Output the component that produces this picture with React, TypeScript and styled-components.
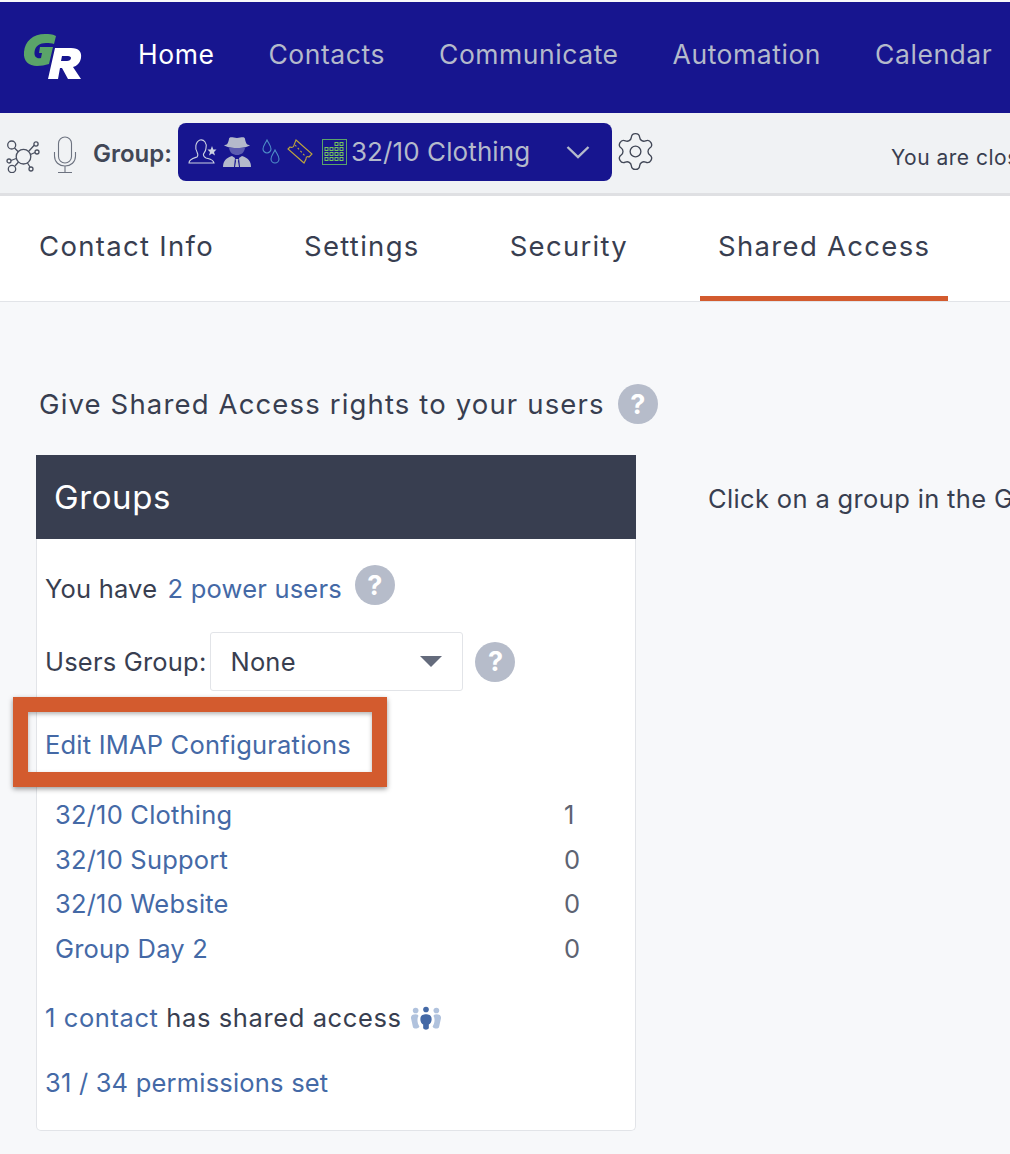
import styled, { createGlobalStyle } from 'styled-components'
import { Settings } from 'lucide-react'

const GlobalStyle = createGlobalStyle`
  html, body {
    margin: 0;
    padding: 0;
    background: #f7f8fa;
    overflow: hidden;
  }
  * {
    box-sizing: border-box;
  }
  body {
    font-family: Inter, "Liberation Sans", sans-serif;
    color: #383e50;
  }
`

const Page = styled.div`
  width: 1010px;
  height: 1154px;
  padding-top: 2px;
  background: #f7f8fa;
  overflow: hidden;
  position: relative;
`

const Navbar = styled.nav`
  height: 111px;
  background: #17158f;
  display: flex;
  align-items: center;
  padding: 0 0 8px 22px;
  white-space: nowrap;
`

const LogoBox = styled.svg`
  width: 62px;
  height: 50px;
  margin: 8px 54px 0 0;
  flex-shrink: 0;
`

const NavLink = styled.a<{ $active?: boolean }>`
  font-size: 26.5px;
  letter-spacing: 0.55px;
  margin-right: 54px;
  color: ${p => (p.$active ? '#ffffff' : '#b4bacb')};
`

const Toolbar = styled.div`
  height: 83px;
  background: #f0f2f4;
  border-bottom: 3px solid #dfe0e3;
  display: flex;
  align-items: center;
  padding: 0 0 2px 6px;
  white-space: nowrap;
`

const ToolIcon = styled.svg`
  flex-shrink: 0;
  fill: none;
  stroke: #4a5060;
  stroke-width: 1.3;
`

const NetworkSvg = styled(ToolIcon)`
  margin-top: 8px;
`

const MicSvg = styled(ToolIcon)`
  margin: 5px 0 0 13px;
  stroke: #6d7380;
  stroke-width: 1.1;
`

const GearIcon = styled(Settings)`
  flex-shrink: 0;
  margin: -2px 0 0 2px;
  color: #414756;
`

const GroupLabel = styled.span`
  font-size: 24px;
  font-weight: 600;
  margin: 3px 6px 0 16px;
  color: #414756;
`

const GroupSelect = styled.div`
  width: 434px;
  height: 58px;
  background: #17158f;
  border-radius: 8px;
  display: flex;
  align-items: center;
  padding: 0 22px 0 10px;
  flex-shrink: 0;
`

const GroupIcon = styled.svg`
  flex-shrink: 0;
`

const SpySvg = styled(GroupIcon)`
  margin: 0 0 0 5px;
`

const DropsSvg = styled(GroupIcon)`
  margin: 0 0 0 9px;
`

const TicketSvg = styled(GroupIcon)`
  margin: 0 0 0 6px;
`

const BuildingSvg = styled(GroupIcon)`
  margin: 0 0 0 9px;
`

const GroupName = styled.span`
  font-size: 26px;
  letter-spacing: 0.1px;
  color: #b4bacb;
  margin: -2px 0 0 4px;
  flex: 1;
`

const Closing = styled.span`
  font-size: 21px;
  letter-spacing: 0.5px;
  margin: 10px 0 0 234px;
  color: #383e50;
`

const Tabs = styled.div`
  height: 106px;
  background: #ffffff;
  border-bottom: 1px solid #e2e4e8;
  display: flex;
  padding-left: 21px;
`

const Tab = styled.a<{ $active?: boolean }>`
  height: 105px;
  padding: 0 18px;
  margin-right: 54px;
  display: flex;
  align-items: center;
  font-size: 27.5px;
  letter-spacing: 1.3px;
  color: #383e50;
  border-bottom: 5px solid ${p => (p.$active ? '#d35b2e' : 'transparent')};
`

const Content = styled.div`
  padding: 80px 0 0 36px;
`

const Heading = styled.div`
  height: 44px;
  display: flex;
  align-items: center;
  gap: 13px;
  padding-left: 3px;
  font-size: 27.5px;
  letter-spacing: 1.15px;
  color: #383e50;
`

const HelpDot = styled.span`
  width: 40px;
  height: 40px;
  border-radius: 50%;
  background: #b6bcca;
  color: #ffffff;
  font-size: 27px;
  font-weight: 700;
  letter-spacing: 0;
  display: inline-flex;
  align-items: center;
  justify-content: center;
  flex-shrink: 0;
`

const PowerHelp = styled(HelpDot)`
  margin: 0 0 6px 13px;
`

const Columns = styled.div`
  display: flex;
  margin-top: 29px;
`

const Panel = styled.section`
  width: 600px;
  height: 676px;
  background: #ffffff;
  border: 1px solid #e2e4e8;
  border-top: none;
  border-radius: 0 0 5px 5px;
  flex-shrink: 0;
`

const PanelHeader = styled.h2`
  margin: 0 -1px;
  height: 84px;
  padding-left: 18px;
  background: #383e50;
  color: #ffffff;
  display: flex;
  align-items: center;
  font-size: 33px;
  letter-spacing: 0.6px;
  font-weight: 400;
`

const PanelBody = styled.div`
  padding: 26px 0 0 8px;
  font-size: 25.5px;
  letter-spacing: 0.2px;
  color: #383e50;
`

const Line = styled.div`
  display: flex;
  align-items: center;
  white-space: pre;
`

const Link = styled.a`
  color: #4469a6;
`

const PowerLink = styled(Link)`
  margin-left: 3px;
`

const UsersRow = styled(Line)`
  margin-top: 21px;
  gap: 12px;
`

const UsersLabel = styled.span`
  margin-right: -8px;
`

const Dropdown = styled.div`
  width: 253px;
  height: 59px;
  background: #ffffff;
  border: 1px solid #e2e4e8;
  border-radius: 3px;
  display: flex;
  align-items: center;
  justify-content: space-between;
  padding: 0 20px 0 19px;
`

const Caret = styled.span`
  width: 0;
  height: 0;
  border-left: 11px solid transparent;
  border-right: 11px solid transparent;
  border-top: 11px solid #646b7c;
`

const ImapLine = styled(Line)`
  margin-top: 31px;
  height: 44px;
`

const GroupList = styled.div`
  margin: 26px 0 0 10px;
`

const GroupRow = styled.div`
  height: 44.7px;
  display: grid;
  grid-template-columns: 509px 40px;
  align-items: center;
`

const GroupCount = styled.span`
  color: #5d6372;
`

const SharedLine = styled(Line)`
  margin-top: 25px;
  height: 44px;
  gap: 8px;
  letter-spacing: 0.6px;
`

const PermissionsLine = styled(Line)`
  margin-top: 21px;
  height: 44px;
`

const HintText = styled.div`
  margin: 28px 0 0 72px;
  font-size: 25.5px;
  letter-spacing: 0.35px;
  white-space: nowrap;
  color: #383e50;
`

const Highlight = styled.div`
  position: absolute;
  left: 13px;
  top: 697px;
  width: 374px;
  height: 90px;
  border: 15px solid #d35b2e;
  box-shadow: 0 2px 5px rgba(0, 0, 0, 0.4), inset 0 2px 4px rgba(0, 0, 0, 0.3);
  pointer-events: none;
`

function Logo() {
  return (
    <LogoBox viewBox="0 0 62 50">
      <path
        d="M34 3 C30 1 27 1 23 1 C11 1 3 8 2 19 C1 28 7 33 15 33 C19 33 23 32 27 31 L31 14 L18 14 L17 20 L20 20 L19 25 C15 26 12 24 12.5 19 C13 13 18 10 24 10 C27 10 30 10 32 11 Z"
        fill="#5aa469"
      />
      <path
        d="M33 15 L49 15 C57 15 60 19 59 25 C58 30 55 33 51 34 L59 46 L46 46 L40 35 L38 35 L36 46 L26 46 Z M40 23 L39 28 L45 28 C47 28 49 27 49 25 C49 24 48 23 46 23 Z"
        fill="#ffffff"
        fillRule="evenodd"
      />
    </LogoBox>
  )
}

function NetworkIcon() {
  return (
    <NetworkSvg width="34" height="34" viewBox="0 0 34 34">
      <circle cx="17.5" cy="17.7" r="7.3" />
      <circle cx="5.7" cy="6" r="4" />
      <circle cx="6" cy="30" r="3.7" />
      <circle cx="30" cy="5" r="2.1" />
      <circle cx="31" cy="13" r="2" />
      <circle cx="3" cy="22" r="2" />
      <circle cx="25" cy="30" r="2" />
      <path d="M8.5 9 L12.5 13 M9 27 L12.5 23 M28.2 6.3 L23 12 M29 13.5 L24.5 15.5 M5 21.5 L10.2 19.5 M24 28 L21.5 24" />
    </NetworkSvg>
  )
}

function MicIcon() {
  return (
    <MicSvg width="24" height="38" viewBox="0 0 24 38">
      <rect x="5.5" y="1" width="13" height="26" rx="6.5" />
      <path d="M1.5 16 V20 C1.5 26 6 30 12 30 C18 30 22.5 26 22.5 20 V16 M12 30 V36.5 M5 36.5 H19" />
    </MicSvg>
  )
}

function UserStarIcon() {
  return (
    <GroupIcon width="29" height="28" viewBox="0 0 29 28" fill="none" stroke="#ccd2e2" strokeWidth="1.1">
      <path d="M1 25 C1 21 6 20 9 19 C10 18 10 16 9 14 C7 11 7 4 12 2 C16 1 19 5 18 10 C18 13 16 15 15.5 16 C15 18 16 19 18 20 C21 21 25 21 26 25 Z" />
      <path d="M24 8 L25.3 11.5 L28.5 11.5 L26 14 L27 17.5 L24 15.5 L21 17.5 L22 14 L19.5 11.5 L22.7 11.5 Z" fill="#ccd2e2" stroke="none" />
    </GroupIcon>
  )
}

function SpyIcon() {
  return (
    <SpySvg width="30" height="32" viewBox="0 0 30 32">
      <path d="M2 9 C5 9 6 8 7 3 C7 0.5 10 1 15 2 C20 1 23 0.5 23 3 C24 8 25 9 28 9 C26 11 22 12 15 12 C8 12 4 11 2 9 Z" fill="#b4bacb" />
      <path d="M7 12 C8 17 11 19 15 19 C19 19 22 17 23 12 Z" fill="#5b5cb0" />
      <path d="M1 31 C1 25 4 22 10 20 L13 22 L12 31 Z M29 31 C29 25 26 22 20 20 L17 22 L18 31 Z M13.5 23 H16.5 L16 25 L17 31 H13 L14 25 Z" fill="#b4bacb" />
    </SpySvg>
  )
}

function DropsIcon() {
  return (
    <DropsSvg width="20" height="28" viewBox="0 0 20 28" fill="none" stroke="#4f8fc7" strokeWidth="1.1">
      <path d="M6 2 C4 6 2 8 2 11 C2 13 4 15 6 15 C8 15 10 13 10 11 C10 8 8 6 6 2 Z" />
      <path d="M14 12 C12 16 10 18 10 21 C10 23.5 12 25 14 25 C16 25 18 23.5 18 21 C18 18 16 16 14 12 Z" />
    </DropsSvg>
  )
}

function TicketIcon() {
  return (
    <TicketSvg width="26" height="26" viewBox="0 0 26 26" fill="none" stroke="#bfa53c" strokeWidth="1.1">
      <path d="M9 1 L25 15 L22 18 C20 17 19 18 19 20 L17 24 L1 10 L3 8 C5 9 7 8 7 6 Z" />
      <path d="M8 6 L19 18" strokeDasharray="2 2" />
    </TicketSvg>
  )
}

function BuildingIcon() {
  const cells = [0, 1, 2, 3]
    .flatMap(r => [0, 1, 2, 3].map(c => [c, r]))
    .filter(([c, r]) => r > 0 || c > 1)
  return (
    <BuildingSvg width="25" height="26" viewBox="0 0 25 26" fill="none" stroke="#5aa469">
      <rect x="0.5" y="0.5" width="24" height="25" strokeWidth="1" />
      {cells.map(([c, r]) => (
        <rect key={`${c}-${r}`} x={3 + c * 5} y={3.5 + r * 5} width="3" height="3" strokeWidth="1" stroke="#74c65a" />
      ))}
    </BuildingSvg>
  )
}

function PeopleIcon() {
  return (
    <svg width="32" height="26" viewBox="0 0 34 26">
      <g fill="#b0c2dd">
        <circle cx="6" cy="5" r="3" />
        <circle cx="28" cy="5" r="3" />
        <path d="M1 13 C1 10 3 9 6 9 C8 9 9 10 9 11 C7 14 8 19 10 22 C9 25 3 25 3 22 Z" />
        <path d="M33 13 C33 10 31 9 28 9 C26 9 25 10 25 11 C27 14 26 19 24 22 C25 25 31 25 31 22 Z" />
      </g>
      <g fill="#4469a6">
        <circle cx="17" cy="4" r="3" />
        <path d="M11 14 C11 10 14 9 17 9 C20 9 23 10 23 14 C23 18 21 19 20 20 L20 24 C19 26 15 26 14 24 L14 20 C13 19 11 18 11 14 Z" />
      </g>
    </svg>
  )
}

export default function App() {
  return (
    <>
      <GlobalStyle />
      <Page>
        <Navbar>
          <Logo />
          <NavLink $active>Home</NavLink>
          <NavLink>Contacts</NavLink>
          <NavLink>Communicate</NavLink>
          <NavLink>Automation</NavLink>
          <NavLink>Calendar</NavLink>
        </Navbar>
        <Toolbar>
          <NetworkIcon />
          <MicIcon />
          <GroupLabel>Group:</GroupLabel>
          <GroupSelect>
            <UserStarIcon />
            <SpyIcon />
            <DropsIcon />
            <TicketIcon />
            <BuildingIcon />
            <GroupName>32/10 Clothing</GroupName>
            <svg width="24" height="14" viewBox="0 0 24 14" fill="none" stroke="#b4bacb" strokeWidth="2.4">
              <path d="M1.5 2 L12 12 L22.5 2" />
            </svg>
          </GroupSelect>
          <GearIcon size={43} strokeWidth={0.75} />
          <Closing>You are closing</Closing>
        </Toolbar>
        <Tabs>
          <Tab>Contact Info</Tab>
          <Tab>Settings</Tab>
          <Tab>Security</Tab>
          <Tab $active>Shared Access</Tab>
        </Tabs>
        <Content>
          <Heading>
            Give Shared Access rights to your users
            <HelpDot>?</HelpDot>
          </Heading>
          <Columns>
            <Panel>
              <PanelHeader>Groups</PanelHeader>
              <PanelBody>
                <Line>
                  You have <PowerLink>2 power users</PowerLink>
                  <PowerHelp>?</PowerHelp>
                </Line>
                <UsersRow>
                  <UsersLabel>Users Group:</UsersLabel>
                  <Dropdown>
                    None
                    <Caret />
                  </Dropdown>
                  <HelpDot>?</HelpDot>
                </UsersRow>
                <ImapLine>
                  <Link>Edit IMAP Configurations</Link>
                </ImapLine>
                <GroupList>
                  <GroupRow><Link>32/10 Clothing</Link><GroupCount>1</GroupCount></GroupRow>
                  <GroupRow><Link>32/10 Support</Link><GroupCount>0</GroupCount></GroupRow>
                  <GroupRow><Link>32/10 Website</Link><GroupCount>0</GroupCount></GroupRow>
                  <GroupRow><Link>Group Day 2</Link><GroupCount>0</GroupCount></GroupRow>
                </GroupList>
                <SharedLine>
                  <span><Link>1 contact</Link> has shared access</span>
                  <PeopleIcon />
                </SharedLine>
                <PermissionsLine>
                  <Link>31 / 34 permissions set</Link>
                </PermissionsLine>
              </PanelBody>
            </Panel>
            <HintText>Click on a group in the Groups list</HintText>
          </Columns>
        </Content>
        <Highlight />
      </Page>
    </>
  )
}
